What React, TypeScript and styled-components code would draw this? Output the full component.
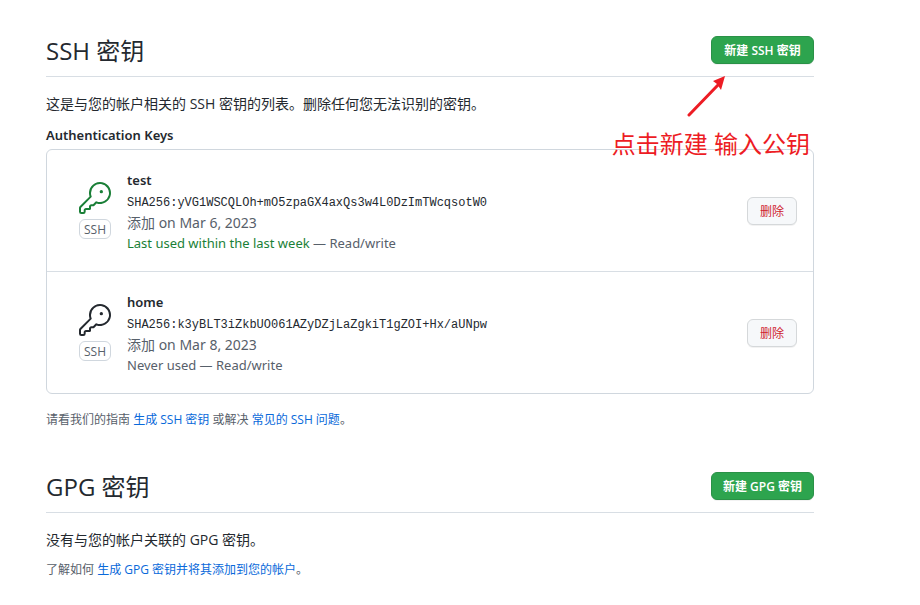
import React from "react";
import styled, { createGlobalStyle } from "styled-components";
import { GoKey } from "react-icons/go";

const GlobalStyle = createGlobalStyle`
  *, *::before, *::after { box-sizing: border-box; }
  body {
    margin: 0;
    background: #ffffff;
    color: #24292f;
    font: 14px/21px "Noto Sans", "Noto Sans CJK SC", sans-serif;
  }
`;

const Page = styled.main`
  padding: 32px 106px 24px 46px;
`;

const Section = styled.section`
  & + & { margin-top: 39px; }
`;

const SectionHeader = styled.header`
  position: relative;
  display: flex;
  align-items: center;
  justify-content: space-between;
  height: 45px;
  padding-bottom: 8px;
  border-bottom: 1px solid #d8dee4;
`;

const Title = styled.h2`
  margin: 0;
  padding-top: 2px;
  font-family: "Open Sans", "Noto Sans CJK SC", sans-serif;
  font-size: 24px;
  font-weight: 400;
  line-height: 36px;
`;

const Button = styled.button<{ $tone: "primary" | "danger" }>`
  flex: none;
  height: 28px;
  min-width: ${(p) => (p.$tone === "primary" ? 103 : 50)}px;
  padding: 2px 10px 0;
  border: 1px solid ${(p) => (p.$tone === "primary" ? "#2a9147" : "#d5d8da")};
  border-radius: 6px;
  background: ${(p) => (p.$tone === "primary" ? "#2da44e" : "#f6f8fa")};
  box-shadow: 0 1px 0 rgba(27, 31, 36, 0.06);
  color: ${(p) => (p.$tone === "primary" ? "#ffffff" : "#cf222e")};
  font-family: "Open Sans", "Noto Sans CJK SC", sans-serif;
  font-size: 12px;
  font-weight: ${(p) => (p.$tone === "primary" ? 600 : 400)};
  line-height: 20px;
  cursor: pointer;
`;

const Intro = styled.p`
  margin: 16px 0 0;
  font-family: "Open Sans", "Noto Sans CJK SC", sans-serif;
`;

const ListTitle = styled.h3`
  margin: 11px 0 3px;
  font-size: 13px;
  font-weight: 600;
  line-height: 21px;
`;

const KeyList = styled.ul`
  margin: 0;
  padding: 0;
  list-style: none;
  border: 1px solid #d0d7de;
  border-radius: 6px;
`;

const KeyRow = styled.li`
  display: flex;
  align-items: center;
  padding: 18px 16px 17px 32px;
  & + & { border-top: 1px solid #d8dee4; }
`;

const KeyKind = styled.div<{ $recent: boolean }>`
  display: flex;
  flex-direction: column;
  align-items: center;
  gap: 5px;
  width: 32px;
  margin-right: 16px;
  padding-bottom: 1px;
  color: ${(p) => (p.$recent ? "#1a7f37" : "#24292f")};
  svg { display: block; }
`;

const Badge = styled.span`
  width: 32px;
  height: 20px;
  border: 1px solid #d0d7de;
  border-radius: 6px;
  color: #57606a;
  font-family: "Open Sans", sans-serif;
  font-size: 12px;
  line-height: 20px;
  text-align: center;
`;

const KeyInfo = styled.div`
  flex: 1;
  min-width: 0;
  padding-top: 2px;
  color: #57606a;
`;

const KeyName = styled.strong`
  display: block;
  color: #24292f;
  font-size: 13px;
  font-weight: 600;
`;

const Fingerprint = styled.code`
  display: block;
  padding-top: 4px;
  overflow-wrap: anywhere;
  color: #24292f;
  font-family: "Liberation Mono", monospace;
  font-size: 12px;
  line-height: 17px;
`;

const Added = styled.div`
  font-size: 14px;
`;

const Usage = styled.div`
  font-size: 13px;
`;

const Recent = styled.span`
  color: #1a7f37;
`;

const Note = styled.p<{ $gap: number }>`
  margin: ${(p) => p.$gap}px 0 0;
  color: #57606a;
  font-family: "Open Sans", "Noto Sans CJK SC", sans-serif;
  font-size: 12px;
  line-height: 18px;
`;

const Link = styled.a`
  color: #0969da;
  text-decoration: none;
`;

const Callout = styled.div`
  position: absolute;
  top: 43px;
  right: 4px;
  display: flex;
  flex-direction: column;
  align-items: center;
  gap: 9px;
  color: #ed1c24;
  font-size: 24px;
  line-height: 36px;
  white-space: nowrap;
  pointer-events: none;
  svg { display: block; margin-right: 8px; }
`;

type SshKey = { name: string; hash: string; date: string; recent: boolean };

const keys: SshKey[] = [
  { name: "test", hash: "SHA256:yVG1WSCQLOh+mO5zpaGX4axQs3w4L0DzImTWcqsotW0", date: "Mar 6, 2023", recent: true },
  { name: "home", hash: "SHA256:k3yBLT3iZkbUO061AZyDZjLaZgkiT1gZOI+Hx/aUNpw", date: "Mar 8, 2023", recent: false },
];

function KeyItem({ item }: { item: SshKey }) {
  return (
    <KeyRow>
      <KeyKind $recent={item.recent}>
        <GoKey size={32} aria-hidden />
        <Badge>SSH</Badge>
      </KeyKind>
      <KeyInfo>
        <KeyName>{item.name}</KeyName>
        <Fingerprint>{item.hash}</Fingerprint>
        <Added>添加 on {item.date}</Added>
        <Usage>
          {item.recent ? <Recent>Last used within the last week</Recent> : "Never used"} — Read/write
        </Usage>
      </KeyInfo>
      <Button $tone="danger" type="button">删除</Button>
    </KeyRow>
  );
}

export default function App() {
  return (
    <>
      <GlobalStyle />
      <Page lang="zh-CN">
        <Section>
          <SectionHeader>
            <Title>SSH 密钥</Title>
            <Button $tone="primary" type="button">新建 SSH 密钥</Button>
            <Callout>
              <svg width="40" height="42" viewBox="0 0 40 42" aria-hidden="true">
                <path d="M2 40 L31 10" stroke="#ed1c24" strokeWidth="3" strokeLinecap="round" />
                <path d="M38 1 L26 6 L30 9 L34 15 Z" fill="#ed1c24" />
              </svg>
              点击新建 输入公钥
            </Callout>
          </SectionHeader>
          <Intro>这是与您的帐户相关的 SSH 密钥的列表。删除任何您无法识别的密钥。</Intro>
          <ListTitle>Authentication Keys</ListTitle>
          <KeyList>
            {keys.map((k) => <KeyItem key={k.name} item={k} />)}
          </KeyList>
          <Note $gap={17}>
            请看我们的指南 <Link href="#ssh-guide">生成 SSH 密钥</Link> 或解决 <Link href="#ssh-issues">常见的 SSH 问题</Link>。
          </Note>
        </Section>
        <Section>
          <SectionHeader>
            <Title>GPG 密钥</Title>
            <Button $tone="primary" type="button">新建 GPG 密钥</Button>
          </SectionHeader>
          <Intro>没有与您的帐户关联的 GPG 密钥。</Intro>
          <Note $gap={11}>
            了解如何 <Link href="#gpg-guide">生成 GPG 密钥并将其添加到您的帐户</Link>。
          </Note>
        </Section>
      </Page>
    </>
  );
}
